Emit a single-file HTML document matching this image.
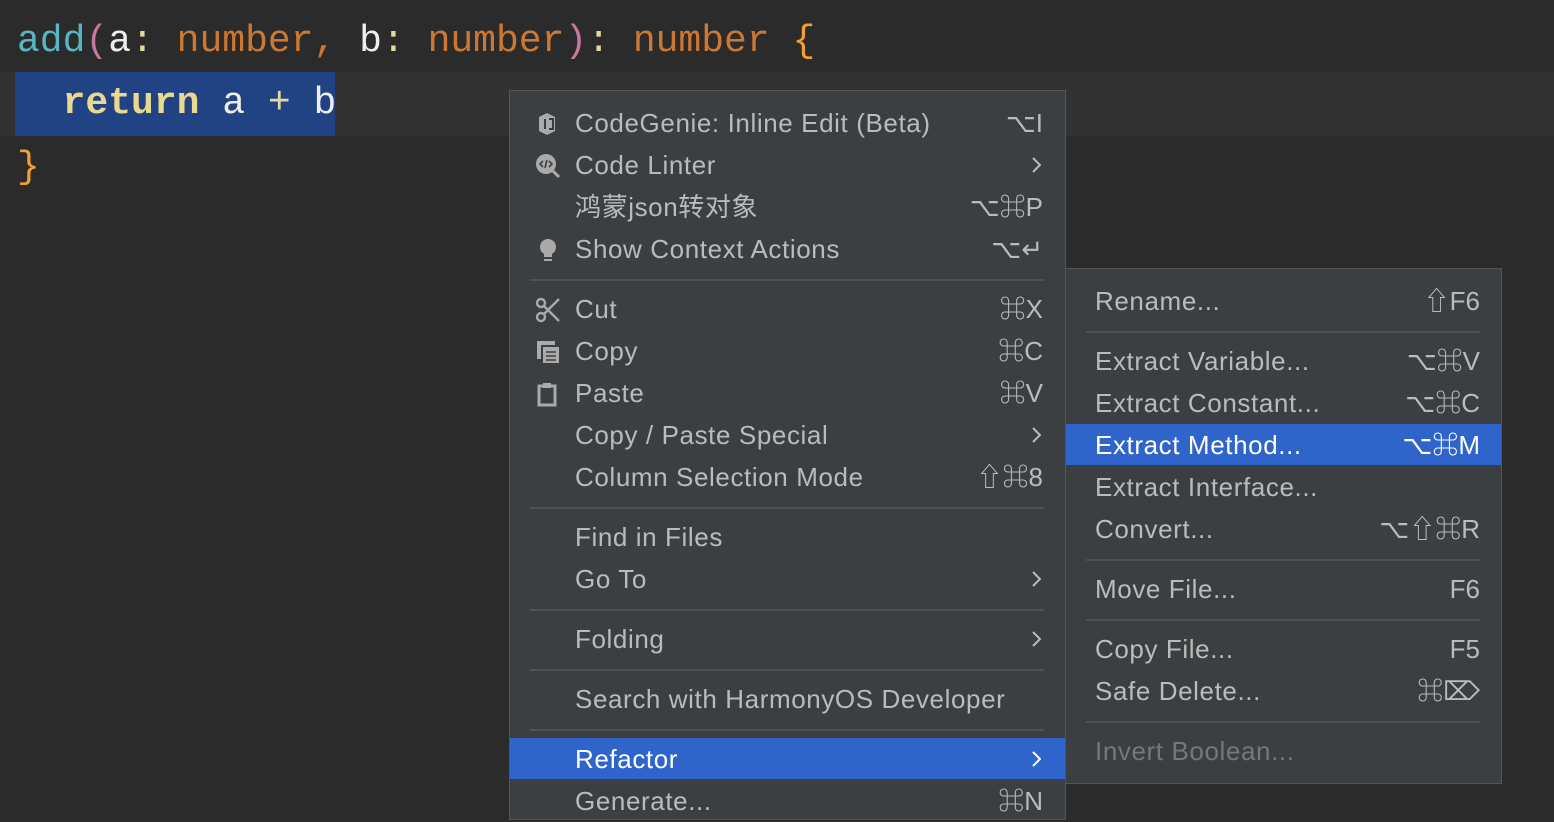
<!DOCTYPE html>
<html><head><meta charset="utf-8"><style>
*{margin:0;padding:0;box-sizing:border-box}
body{width:1554px;height:812px;overflow:hidden;background:#2b2b2b;position:relative;font-family:"Liberation Sans","Noto Sans CJK SC",sans-serif}
.code{position:absolute;left:17px;font-family:"Liberation Mono",monospace;font-size:38px;white-space:pre;line-height:64px}
.m{position:absolute;background:#3c3f41;border:1px solid #515658}
.r{position:absolute;left:0;right:0;height:42px;line-height:42px;font-size:26px;letter-spacing:0.6px;color:#bbbbbb;white-space:nowrap}
.r .t{position:absolute}
.r .k{position:absolute;text-align:right;letter-spacing:0}
.hl{background:#2f65ca;color:#fff}
.sep{position:absolute;height:2px;background:#4f5254}
.ic{position:absolute;left:25px;top:9px;width:26px;height:26px}
.ch{position:absolute;right:24px;top:13px;width:10px;height:16px}
</style></head><body>
<div style="position:absolute;left:0;top:72px;width:1554px;height:64px;background:#323232"></div>
<div style="position:absolute;left:15px;top:72px;width:320px;height:64px;background:#214283"></div>
<div class="code" style="top:10px"><span style="color:#56b6c2">add</span><span style="color:#c678a0">(</span><span style="color:#eee">a</span><span style="color:#e6d8a0">:</span> <span style="color:#cc7832">number</span><span style="color:#cc7832">,</span> <span style="color:#eee">b</span><span style="color:#e6d8a0">:</span> <span style="color:#cc7832">number</span><span style="color:#c678a0">)</span><span style="color:#e6d8a0">:</span> <span style="color:#cc7832">number</span> <span style="color:#f0a030">{</span></div>
<div class="code" style="top:72px"><span style="color:#e8d890;font-weight:bold">  return</span><span style="color:#eee"> a </span><span style="color:#e6d8a0">+</span><span style="color:#eee"> b</span></div>
<div class="code" style="top:136px;color:#f0a030">}</div>

<div class="m" style="left:509px;top:90px;width:557px;height:730px">
<div class="r" style="top:11px"><svg class="ic" viewBox="0 0 26 26"><path d="M4 6l8-4 8 4v14l-8 4-8-4z" fill="#aaa"/><path d="M10 8v10M14 8h4v10h-4" stroke="#3c3f41" stroke-width="2" fill="none"/></svg><span class="t" style="left:65px">CodeGenie: Inline Edit (Beta)</span><span class="k" style="right:22px">⌥I</span></div>
<div class="r" style="top:53px"><svg class="ic" viewBox="0 0 26 26"><circle cx="11" cy="11" r="10" fill="#aaa"/><path d="M18 18l6 6" stroke="#aaa" stroke-width="3"/><path d="M8 8l-3 3 3 3M14 8l3 3-3 3M12 7l-2 8" stroke="#3c3f41" stroke-width="1.6" fill="none"/></svg><span class="t" style="left:65px">Code Linter</span><svg class="ch" viewBox="0 0 10 16"><path d="M2 1l7 7-7 7" stroke="#bbb" stroke-width="2" fill="none"/></svg></div>
<div class="r" style="top:95px"><span class="t" style="left:65px">鸿蒙json转对象</span><span class="k" style="right:22px">⌥⌘P</span></div>
<div class="r" style="top:137px"><svg class="ic" viewBox="0 0 26 26"><circle cx="13" cy="10" r="8" fill="#aaa"/><rect x="9" y="16" width="8" height="4" fill="#aaa"/><rect x="9" y="22" width="8" height="2" fill="#aaa"/></svg><span class="t" style="left:65px">Show Context Actions</span><span class="k" style="right:22px">⌥↵</span></div>
<div class="sep" style="left:20px;width:514px;top:188px"></div>
<div class="r" style="top:197px"><svg class="ic" viewBox="0 0 26 26"><circle cx="6" cy="6" r="4" stroke="#aaa" stroke-width="2.4" fill="none"/><circle cx="6" cy="20" r="4" stroke="#aaa" stroke-width="2.4" fill="none"/><path d="M9 9l15 15M9 17L24 2" stroke="#aaa" stroke-width="2.4"/></svg><span class="t" style="left:65px">Cut</span><span class="k" style="right:22px">⌘X</span></div>
<div class="r" style="top:239px"><svg class="ic" viewBox="0 0 26 26"><path d="M2 2h4v18h-4z" fill="#aaa"/><path d="M2 2h18v4H2z" fill="#aaa"/><rect x="8" y="8" width="16" height="16" fill="#aaa"/><path d="M11 13h10M11 17h10M11 21h10" stroke="#3c3f41" stroke-width="1.5"/></svg><span class="t" style="left:65px">Copy</span><span class="k" style="right:22px">⌘C</span></div>
<div class="r" style="top:281px"><svg class="ic" viewBox="0 0 26 26"><rect x="4" y="5" width="16" height="19" stroke="#aaa" stroke-width="3" fill="none"/><rect x="8" y="2" width="8" height="5" fill="#aaa"/></svg><span class="t" style="left:65px">Paste</span><span class="k" style="right:22px">⌘V</span></div>
<div class="r" style="top:323px"><span class="t" style="left:65px">Copy / Paste Special</span><svg class="ch" viewBox="0 0 10 16"><path d="M2 1l7 7-7 7" stroke="#bbb" stroke-width="2" fill="none"/></svg></div>
<div class="r" style="top:365px"><span class="t" style="left:65px">Column Selection Mode</span><span class="k" style="right:22px">⇧⌘8</span></div>
<div class="sep" style="left:20px;width:514px;top:416px"></div>
<div class="r" style="top:425px"><span class="t" style="left:65px">Find in Files</span></div>
<div class="r" style="top:467px"><span class="t" style="left:65px">Go To</span><svg class="ch" viewBox="0 0 10 16"><path d="M2 1l7 7-7 7" stroke="#bbb" stroke-width="2" fill="none"/></svg></div>
<div class="sep" style="left:20px;width:514px;top:518px"></div>
<div class="r" style="top:527px"><span class="t" style="left:65px">Folding</span><svg class="ch" viewBox="0 0 10 16"><path d="M2 1l7 7-7 7" stroke="#bbb" stroke-width="2" fill="none"/></svg></div>
<div class="sep" style="left:20px;width:514px;top:578px"></div>
<div class="r" style="top:587px"><span class="t" style="left:65px">Search with HarmonyOS Developer</span></div>
<div class="sep" style="left:20px;width:514px;top:638px"></div>
<div class="r hl" style="top:647px;height:41px"><span class="t" style="left:65px">Refactor</span><svg class="ch" viewBox="0 0 10 16"><path d="M2 1l7 7-7 7" stroke="#fff" stroke-width="2" fill="none"/></svg></div>
<div class="r" style="top:689px"><span class="t" style="left:65px">Generate...</span><span class="k" style="right:22px">⌘N</span></div>
</div>

<div class="m" style="left:1065px;top:268px;width:437px;height:516px">
<div class="r" style="top:11px"><span class="t" style="left:29px">Rename...</span><span class="k" style="right:21px">⇧F6</span></div>
<div class="sep" style="left:20px;width:394px;top:62px"></div>
<div class="r" style="top:71px"><span class="t" style="left:29px">Extract Variable...</span><span class="k" style="right:21px">⌥⌘V</span></div>
<div class="r" style="top:113px"><span class="t" style="left:29px">Extract Constant...</span><span class="k" style="right:21px">⌥⌘C</span></div>
<div class="r hl" style="top:155px;height:41px"><span class="t" style="left:29px">Extract Method...</span><span class="k" style="right:21px">⌥⌘M</span></div>
<div class="r" style="top:197px"><span class="t" style="left:29px">Extract Interface...</span></div>
<div class="r" style="top:239px"><span class="t" style="left:29px">Convert...</span><span class="k" style="right:21px">⌥⇧⌘R</span></div>
<div class="sep" style="left:20px;width:394px;top:290px"></div>
<div class="r" style="top:299px"><span class="t" style="left:29px">Move File...</span><span class="k" style="right:21px">F6</span></div>
<div class="sep" style="left:20px;width:394px;top:350px"></div>
<div class="r" style="top:359px"><span class="t" style="left:29px">Copy File...</span><span class="k" style="right:21px">F5</span></div>
<div class="r" style="top:401px"><span class="t" style="left:29px">Safe Delete...</span><span class="k" style="right:21px">⌘⌦</span></div>
<div class="sep" style="left:20px;width:394px;top:452px"></div>
<div class="r" style="top:461px;color:#777"><span class="t" style="left:29px">Invert Boolean...</span></div>
</div>
</body></html>
